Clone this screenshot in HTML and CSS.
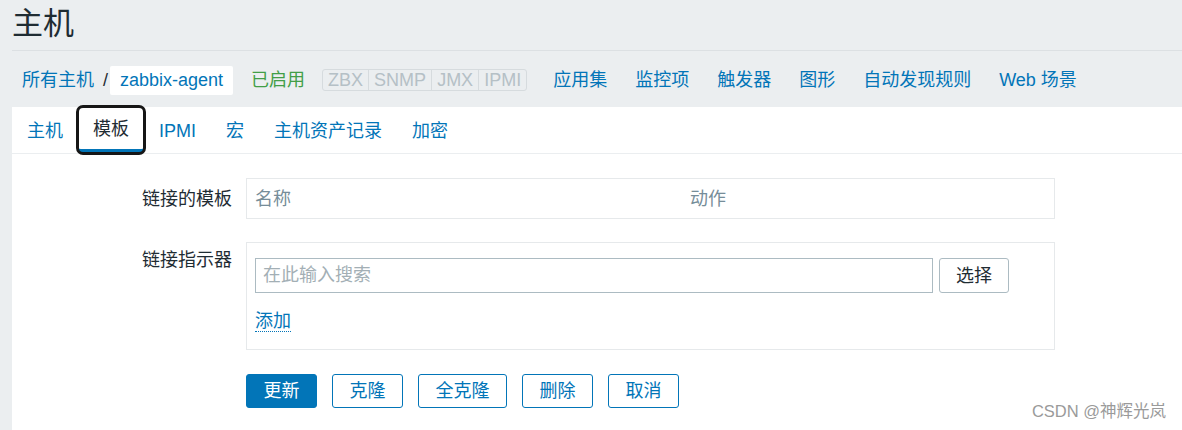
FILE: index.html
```html
<!DOCTYPE html>
<html lang="zh-CN">
<head>
    <meta charset="UTF-8">
    <title>主机 - zabbix-agent</title>
    <link rel="stylesheet" href="styles.css">
</head>
<body>
    <header class="page-header">
        <h1>主机</h1>
    </header>

    <nav class="host-nav">
        <a class="link" href="#">所有主机</a>
        <span class="sep">/</span>
        <span class="current-host">zabbix-agent</span>
        <span class="status-on">已启用</span>
        <span class="avail">
            <span class="avail-tag">ZBX</span><span class="avail-tag">SNMP</span><span class="avail-tag">JMX</span><span class="avail-tag">IPMI</span>
        </span>
        <ul class="host-links">
            <li><a class="link" href="#">应用集</a></li>
            <li><a class="link" href="#">监控项</a></li>
            <li><a class="link" href="#">触发器</a></li>
            <li><a class="link" href="#">图形</a></li>
            <li><a class="link" href="#">自动发现规则</a></li>
            <li><a class="link" href="#">Web 场景</a></li>
        </ul>
    </nav>

    <main class="panel">
        <ul class="tabs">
            <li class="tab"><a href="#">主机</a></li>
            <li class="tab active"><a href="#">模板</a></li>
            <li class="tab"><a href="#">IPMI</a></li>
            <li class="tab"><a href="#">宏</a></li>
            <li class="tab"><a href="#">主机资产记录</a></li>
            <li class="tab"><a href="#">加密</a></li>
        </ul>

        <form class="form">
            <div class="form-row">
                <label class="form-label label-mid">链接的模板</label>
                <div class="form-field">
                    <table class="linked-table">
                        <tr>
                            <th class="col-name">名称</th>
                            <th>动作</th>
                        </tr>
                    </table>
                </div>
            </div>

            <div class="form-row">
                <label class="form-label label-top">链接指示器</label>
                <div class="form-field box">
                    <div class="search-line">
                        <input class="search-input" type="text" placeholder="在此输入搜索">
                        <button class="btn-alt" type="button">选择</button>
                    </div>
                    <a class="link dotted" href="#">添加</a>
                </div>
            </div>

            <div class="form-actions">
                <button class="btn primary" type="button">更新</button>
                <button class="btn" type="button">克隆</button>
                <button class="btn" type="button">全克隆</button>
                <button class="btn" type="button">删除</button>
                <button class="btn" type="button">取消</button>
            </div>
        </form>
    </main>

    <div class="watermark">CSDN @神辉光岚</div>
</body>
</html>
```

FILE: styles.css
```css
body {
    margin: 0;
    background: #ebeef0;
    color: #1f2c33;
    font-family: "Liberation Sans", "Noto Sans CJK SC", sans-serif;
    font-size: 18px;
    line-height: 22px;
    overflow: hidden;
    height: 430px;
}
a {
    text-decoration: none;
}
ul {
    list-style: none;
    margin: 0;
    padding: 0;
}
.link {
    color: #0275b8;
}
.page-header {
    margin-left: 12px;
    height: 51px;
    box-sizing: border-box;
    border-bottom: 1px solid #dce0e3;
}
.page-header h1 {
    margin: 0;
    font-size: 31px;
    font-weight: normal;
    line-height: 48px;
}
.host-nav {
    display: flex;
    align-items: center;
    height: 56px;
    padding: 2px 0 0 22px;
    box-sizing: border-box;
}
.sep {
    margin: 0 2px 0 9px;
}
.current-host {
    background: #fff;
    color: #0275b8;
    padding: 0 10px;
    height: 29px;
    line-height: 29px;
    border-radius: 2px;
}
.status-on {
    color: #429e47;
    margin-left: 18px;
}
.avail {
    display: flex;
    margin-left: 17px;
    border: 1px solid #d6dbde;
    border-radius: 3px;
}
.avail-tag {
    color: #b5c0c6;
    padding: 0 5px;
    height: 20px;
    line-height: 20px;
    border-left: 1px solid #d6dbde;
}
.avail-tag:first-child {
    border-left: none;
}
.host-links {
    display: flex;
    gap: 28px;
    margin-left: 26px;
}
.panel {
    margin-left: 12px;
    background: #fff;
    height: 340px;
}
.tabs {
    display: flex;
    height: 47px;
    border-bottom: 1px solid #ebeef0;
    box-sizing: border-box;
}
.tab {
    padding: 2px 15px 0;
    height: 46px;
    line-height: 44px;
    box-sizing: border-box;
}
.tab a {
    color: #0275b8;
}
.tab.active {
    border-bottom: 4px solid #0275b8;
    line-height: 40px;
    outline: 3px solid #161616;
    outline-offset: -1px;
    border-radius: 5px;
}
.tab.active a {
    color: #1f2c33;
}
.form {
    padding-top: 24px;
}
.form-row {
    display: flex;
    margin-bottom: 23px;
}
.form-label {
    width: 234px;
    text-align: right;
    padding-right: 14px;
    box-sizing: border-box;
}
.label-mid {
    align-self: center;
}
.label-top {
    padding-top: 7px;
}
.form-field {
    width: 809px;
}
.linked-table {
    width: 100%;
    border-collapse: collapse;
    border: 1px solid #e6e9eb;
}
.linked-table th {
    text-align: left;
    font-weight: normal;
    color: #768d99;
    height: 39px;
    padding: 0 8px;
}
.linked-table .col-name {
    width: 419px;
}
.box {
    border: 1px solid #e6e9eb;
    box-sizing: border-box;
    height: 108px;
    padding: 15px 8px 0;
}
.search-line {
    display: flex;
    gap: 6px;
}
.search-input {
    width: 678px;
    height: 35px;
    box-sizing: border-box;
    border: 1px solid #acbbc2;
    padding: 0 7px;
    font: inherit;
    color: #1f2c33;
}
.search-input::placeholder {
    color: #a3afb5;
}
.btn-alt {
    width: 70px;
    height: 35px;
    background: #fff;
    border: 1px solid #acbbc2;
    border-radius: 3px;
    font: inherit;
    color: #1f2c33;
}
.dotted {
    display: inline-block;
    margin-top: 18px;
    line-height: 20px;
    border-bottom: 1px dotted #0275b8;
}
.form-actions {
    display: flex;
    gap: 15px;
    padding-left: 234px;
    margin-top: 24px;
}
.btn {
    height: 34px;
    padding: 0 16.5px;
    background: #fff;
    border: 1px solid #0275b8;
    border-radius: 3px;
    color: #0275b8;
    font: inherit;
}
.btn.primary {
    background: #0275b8;
    color: #fff;
}
.watermark {
    position: absolute;
    right: 16px;
    top: 400px;
    font-size: 16.5px;
    color: #9a9a9a;
}
```
